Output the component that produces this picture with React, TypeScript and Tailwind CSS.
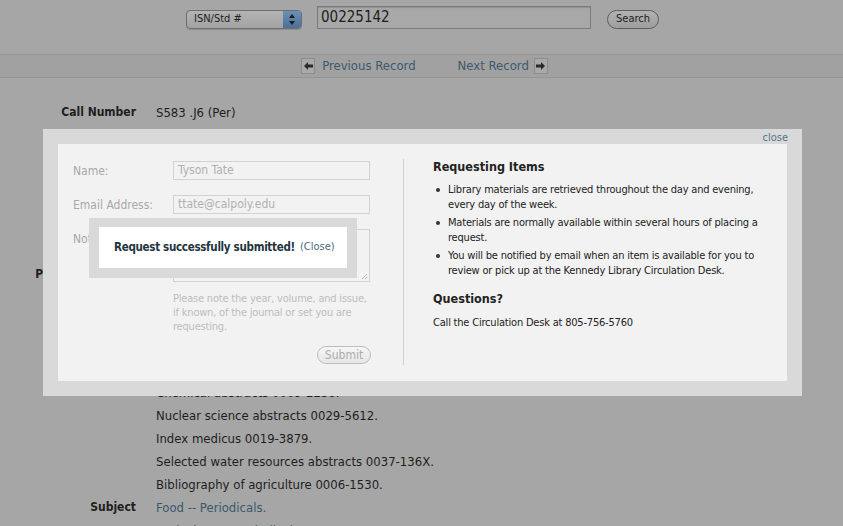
import React from 'react';

const FONT = { fontFamily: '"DejaVu Sans Condensed", "DejaVu Sans", sans-serif' };

const ArrowBox: React.FC<{ dir: 'left' | 'right' }> = ({ dir }) => (
    <span className="w-[14px] h-[16px] border border-[#8c8c8c] bg-[#a9a9a9] flex items-center justify-center">
        <svg width="9" height="8" viewBox="0 0 9 8">
            {dir === 'left'
                ? <path d="M0 4 L4 0 L4 2.5 L9 2.5 L9 5.5 L4 5.5 L4 8 Z" fill="#2a2a2a" />
                : <path d="M9 4 L5 0 L5 2.5 L0 2.5 L0 5.5 L5 5.5 L5 8 Z" fill="#2a2a2a" />}
        </svg>
    </span>
);

const Row: React.FC<{ label: string; lines: string[]; link?: boolean; className?: string }> = ({ label, lines, link, className }) => (
    <div className={`flex ${className ?? ''}`}>
        <div className="w-[136px] shrink-0 text-right font-bold text-[12px] text-[#1e1e1e] leading-[23px]">{label}</div>
        <div className="pl-[20px] text-[13px]">
            {lines.map((l, i) => (
                <div key={i} className={`leading-[23px] ${link ? 'text-[#3a586d]' : 'text-[#1e1e1e]'}`}>{l}</div>
            ))}
        </div>
    </div>
);

const Field: React.FC<{ label: string; value?: string; tall?: boolean; className?: string }> = ({ label, value, tall, className }) => (
    <div className={`flex ${className ?? ''}`}>
        <div className="w-[100px] shrink-0 text-[12px] text-[#a8a8a8] pt-[1px]">{label}</div>
        <div className={`w-[197px] border border-[#d2d2d2] bg-[#f2f2f2] px-[4px] text-[12px] text-[#b0b0b0] relative ${tall ? 'h-[53px]' : 'h-[19px] leading-[17px]'}`}>
            {value}
            {tall && (
                <svg className="absolute right-[1px] bottom-[1px]" width="7" height="7" viewBox="0 0 7 7">
                    <path d="M6 1 L1 6 M6 4 L4 6" stroke="#b8b8b8" strokeWidth="1" />
                </svg>
            )}
        </div>
    </div>
);

export default function App() {
    return (
        <div className="relative w-full h-[526px] overflow-hidden bg-[#a6a6a6] text-[12px]" style={FONT}>
            {/* search header */}
            <div className="h-[54px] pt-[6px]">
                <div className="h-[23px] flex items-center justify-center gap-[15px] pl-[2px]">
                    <div className="w-[116px] h-[19px] mt-[3px] rounded-[4px] border border-[#6f6f6f] bg-gradient-to-b from-[#b4b4b4] to-[#a2a2a2] flex items-center shadow-[0_1px_1px_rgba(0,0,0,0.15)] overflow-hidden">
                        <span className="flex-1 pl-[7px] text-[11px] text-[#222]">ISN/Std #</span>
                        <span className="w-[18px] h-full bg-gradient-to-b from-[#6d8fb5] to-[#4b6f98] flex items-center justify-center">
                            <svg width="6" height="11" viewBox="0 0 6 11">
                                <path d="M3 0 L6 4 L0 4 Z M3 11 L6 7 L0 7 Z" fill="#1c1c1c" />
                            </svg>
                        </span>
                    </div>
                    <div className="w-[274px] h-[23px] border border-[#7c7c7c] bg-[#a8a8a8] pl-[3px] flex items-center text-[15px] text-[#1e1e1e] shadow-[inset_0_1px_1px_rgba(0,0,0,0.15)]">
                        00225142
                    </div>
                    <div className="w-[52px] h-[19px] mt-[3px] ml-[1px] rounded-full border border-[#5e5e5e] bg-gradient-to-b from-[#b2b2b2] to-[#9e9e9e] flex items-center justify-center text-[11px] text-[#1e1e1e]">
                        Search
                    </div>
                </div>
            </div>

            {/* record nav */}
            <div className="h-[24px] border-y border-[#959595] bg-[#a1a1a1] flex items-center justify-center pl-[6px] text-[13px]">
                <ArrowBox dir="left" />
                <span className="ml-[7px] text-[#3d596d]">Previous Record</span>
                <span className="ml-[42px] text-[#3d596d]">Next Record</span>
                <span className="ml-[5px]"><ArrowBox dir="right" /></span>
            </div>

            {/* record body */}
            <div className="pt-[23px]">
                <Row label="Call Number" lines={['S583 .J6 (Per)']} />
                <Row className="mt-[12px]" label="Title" lines={['Journal of the science of food and agriculture.', 'London : Society of Chemical Industry.', 'v. : ill. ; 25-30 cm.']} />
                <Row className="mt-[11.5px]" label="Frequency" lines={['Monthly.', 'Vol. 1 (Jan. 1950)-']} />
                <Row label="Publication Date" lines={['Also available online.', 'Official organ of the Society.', 'Description based on vol. 1.', 'Title from cover.']} />
                <Row className="mt-[3px]" label="Notes" lines={['Indexed in:', 'Chemical abstracts 0009-2258.', 'Nuclear science abstracts 0029-5612.', 'Index medicus 0019-3879.', 'Selected water resources abstracts 0037-136X.', 'Bibliography of agriculture 0006-1530.']} />
                <Row label="Subject" link lines={['Food -- Periodicals.', 'Agriculture -- Periodicals.']} />
            </div>

            {/* modal */}
            <div className="absolute left-[43px] top-[129px] w-[759px] h-[267px] bg-[#d9d9d9] p-[15px]">
                <div className="absolute right-[14px] top-[1px] text-[11px] text-[#55768d]">close</div>
                <div className="h-full bg-[#f2f2f2] flex text-[11px]">
                    <div className="w-[345px] pl-[15px] pt-[17px]">
                        <Field label="Name:" value="Tyson Tate" />
                        <Field className="mt-[15px]" label="Email Address:" value="ttate@calpoly.edu" />
                        <Field className="mt-[15px]" label="Notes:" tall />
                        <p className="ml-[100px] mt-[10px] w-[198px] leading-[14px] tracking-[-0.2px] text-[#bdbdbd]">
                            Please note the year, volume, and issue, if known, of the journal or set you are requesting.
                        </p>
                        <div className="ml-[244px] mt-[12px] w-[54px] h-[18px] rounded-full border border-[#bdbdbd] bg-gradient-to-b from-[#f6f6f6] to-[#e6e6e6] flex items-center justify-center text-[12px] text-[#adadad]">
                            Submit
                        </div>
                    </div>
                    <div className="w-px bg-[#cfcfcf] mt-[15px] mb-[16px]" />
                    <div className="pl-[29px] pt-[15px] text-[#222] tracking-[-0.2px]">
                        <h2 className="text-[12.5px] font-bold leading-[16px] tracking-normal">Requesting Items</h2>
                        <ul className="mt-[7px] w-[335px]">
                            {[
                                'Library materials are retrieved throughout the day and evening, every day of the week.',
                                'Materials are normally available within several hours of placing a request.',
                                'You will be notified by email when an item is available for you to review or pick up at the Kennedy Library Circulation Desk.',
                            ].map((t, i) => (
                                <li key={i} className={`flex leading-[15px] ${i > 0 ? 'mt-[3px]' : ''}`}>
                                    <span className="w-[15px] shrink-0 pl-[3px] pt-[6px]">
                                        <span className="block w-[4px] h-[4px] rounded-full bg-[#333]" />
                                    </span>
                                    <span>{t}</span>
                                </li>
                            ))}
                        </ul>
                        <h2 className="mt-[13px] text-[12.5px] font-bold leading-[16px] tracking-normal">Questions?</h2>
                        <p className="mt-[8px] leading-[15px]">Call the Circulation Desk at 805-756-5760</p>
                    </div>
                </div>

                {/* success toast */}
                <div className="absolute left-[46px] top-[89px] w-[268px] h-[60px] bg-[#d9d9d9] p-[10px] pt-[9px]">
                    <div className="h-[41px] bg-white flex items-center pl-[15px] whitespace-nowrap">
                        <span className="font-bold text-[11.5px] tracking-[-0.3px] text-[#243441]">Request successfully submitted!</span>
                        <span className="ml-[5px] text-[11px] text-[#466a84]">(Close)</span>
                    </div>
                </div>
            </div>
        </div>
    );
}
